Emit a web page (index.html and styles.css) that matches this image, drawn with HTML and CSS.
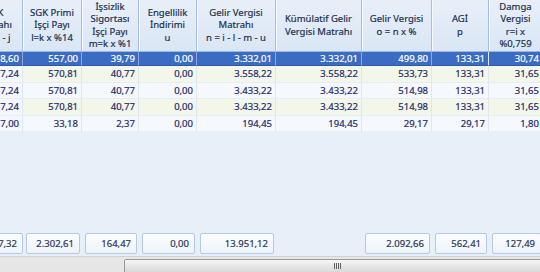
FILE: index.html
```html
<!DOCTYPE html>
<html lang="tr">
<head>
<meta charset="utf-8">
<title>Bordro</title>
<link rel="stylesheet" href="styles.css">
</head>
<body>
<div class="app">
  <div class="viewport">
    <div class="table">
      <div class="hdr">
        <div class="hc">SGK<br>Matrahı<br>k = h - j</div>
        <div class="hc">SGK Primi<br>İşçi Payı<br>l=k x %14</div>
        <div class="hc">İşsizlik<br>Sigortası<br>İşçi Payı<br>m=k x %1</div>
        <div class="hc">Engellilik<br>İndirimi<br>u</div>
        <div class="hc">Gelir Vergisi<br>Matrahı<br>n = i - l - m - u</div>
        <div class="hc">Kümülatif Gelir<br>Vergisi Matrahı</div>
        <div class="hc">Gelir Vergisi<br>o = n x %</div>
        <div class="hc">AGİ<br>p</div>
        <div class="hc">Damga<br>Vergisi<br>r=i x<br>%0,759</div>
      </div>
      <div class="row sel h14">
        <div class="c">3.978,60</div><div class="c">557,00</div><div class="c">39,79</div><div class="c">0,00</div><div class="c">3.332,01</div><div class="c">3.332,01</div><div class="c">499,80</div><div class="c focus">133,31</div><div class="c">30,74</div>
      </div>
      <div class="row alt h17">
        <div class="c">4.077,24</div><div class="c">570,81</div><div class="c">40,77</div><div class="c">0,00</div><div class="c">3.558,22</div><div class="c">3.558,22</div><div class="c">533,73</div><div class="c">133,31</div><div class="c">31,65</div>
      </div>
      <div class="row h16">
        <div class="c">4.077,24</div><div class="c">570,81</div><div class="c">40,77</div><div class="c">0,00</div><div class="c">3.433,22</div><div class="c">3.433,22</div><div class="c">514,98</div><div class="c">133,31</div><div class="c">31,65</div>
      </div>
      <div class="row alt h17">
        <div class="c">4.077,24</div><div class="c">570,81</div><div class="c">40,77</div><div class="c">0,00</div><div class="c">3.433,22</div><div class="c">3.433,22</div><div class="c">514,98</div><div class="c">133,31</div><div class="c">31,65</div>
      </div>
      <div class="row h16">
        <div class="c">237,00</div><div class="c">33,18</div><div class="c">2,37</div><div class="c">0,00</div><div class="c">194,45</div><div class="c">194,45</div><div class="c">29,17</div><div class="c">29,17</div><div class="c">1,80</div>
      </div>
      <div class="filler"></div>
      <div class="foot">
        <div class="fc">16.447,32</div><div class="fc">2.302,61</div><div class="fc">164,47</div><div class="fc">0,00</div><div class="fc">13.951,12</div><div class="fc empty"></div><div class="fc">2.092,66</div><div class="fc">562,41</div><div class="fc">127,49</div>
      </div>
    </div>
  </div>
  <div class="hscroll">
    <div class="thumb"><span class="grip"></span></div>
  </div>
</div>
</body>
</html>
```

FILE: styles.css
```css
* { box-sizing: border-box; }
html, body { margin: 0; padding: 0; }
body {
  width: 540px;
  height: 272px;
  overflow: hidden;
  font-family: "Noto Sans", "Open Sans", sans-serif;
  font-size: 9.5px;
  background: #e9f0fa;
  -webkit-text-stroke: 0.2px currentColor;
}
.app {
  width: 540px;
  height: 272px;
  display: flex;
  flex-direction: column;
  overflow: hidden;
}
.viewport {
  height: 256px;
  overflow: hidden;
  background: #e7eff9;
}
.table {
  width: 576px;
  height: 100%;
  margin-left: -33px;
  display: flex;
  flex-direction: column;
}
.hdr, .row, .foot {
  display: grid;
  grid-template-columns: 56px 59px 57px 58px 79px 86px 70px 57px 54px;
}
.hdr {
  height: 52px;
  background: linear-gradient(#e8eff9, #dae6f5);
  border-bottom: 1px solid #9fb8da;
}
.hc {
  display: flex;
  align-items: center;
  justify-content: center;
  text-align: center;
  line-height: 12.4px;
  color: #1c3150;
  border-right: 1px solid #a6bedf;
  box-shadow: inset 1px 0 0 #f6f9fd;
  white-space: nowrap;
}
.row { color: #24296a; }
.h14 { height: 14px; }
.h16 { height: 16px; }
.h17 { height: 17px; }
.c {
  display: flex;
  align-items: center;
  justify-content: flex-end;
  padding-right: 3px;
  line-height: 12px;
  background: #f5f8fe;
  border-right: 1px solid #dde6f2;
  border-bottom: 1px solid #e6edf7;
  white-space: nowrap;
}
.row.alt .c { background: #f3f7ea; }
.row .c:first-child { background: #f4f7fd; }
.row.sel .c {
  background: #3a6cc4;
  color: #ffffff;
  border-right-color: #8eaadb;
  border-bottom-color: #2c5aa8;
}
.row.sel .c.focus { border-right-color: #e2eaf7; }
.filler { flex: 1; }
.foot {
  height: 26px;
  padding: 3px 0 2px;
}
.fc {
  margin: 0 2px 0 3px;
  display: flex;
  align-items: center;
  justify-content: flex-end;
  padding-right: 5px;
  color: #2b3656;
  background: linear-gradient(#fbfdff, #eef3fb);
  border: 1px solid #b5c8e4;
  border-radius: 2px;
  white-space: nowrap;
}
.fc:first-child { margin-left: 0; margin-right: 0; }
.fc.empty { visibility: hidden; }
.hscroll {
  height: 16px;
  display: flex;
  padding: 2px 0 0 124px;
  background: #e6e6e6;
  border-top: 1px solid #cfd3d8;
  overflow: hidden;
}
.thumb {
  flex: 0 0 426px;
  height: 16px;
  display: flex;
  justify-content: center;
  align-items: center;
  background: linear-gradient(#f6f6f6, #e4e4e4 50%, #d6d6d6);
  border: 1px solid #9a9a9a;
  border-radius: 2px;
}
.grip {
  width: 7px;
  height: 6px;
  margin-top: -2px;
  background: repeating-linear-gradient(90deg, #606060 0 1px, transparent 1px 2px);
}
```
